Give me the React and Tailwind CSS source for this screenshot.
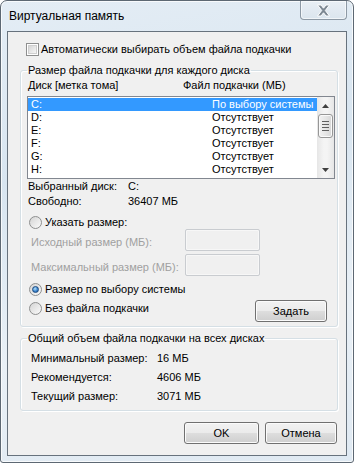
import React from 'react';

const drives = [
    { name: 'C:', size: 'По выбору системы' },
    { name: 'D:', size: 'Отсутствует' },
    { name: 'E:', size: 'Отсутствует' },
    { name: 'F:', size: 'Отсутствует' },
    { name: 'G:', size: 'Отсутствует' },
    { name: 'H:', size: 'Отсутствует' },
];

const btn =
    'h-[22px] rounded-[3px] border border-[#707070] bg-[linear-gradient(to_bottom,#f2f2f2_0%,#ebebeb_48%,#dddddd_52%,#cfcfcf_100%)] shadow-[inset_0_0_0_1px_#fbfbfb] text-black';

const Radio = ({ checked }) => (
    <span className="flex h-[13px] w-[13px] shrink-0 items-center justify-center rounded-full border border-[#8e8f8f] bg-[linear-gradient(135deg,#d4d4d4,#fbfbfb)]">
        {checked && (
            <span className="h-[7px] w-[7px] rounded-full border border-[#1b4a80] bg-[radial-gradient(circle_at_40%_35%,#b7e3fb,#3d86cf_55%,#1d5296)]" />
        )}
    </span>
);

const Checkbox = () => (
    <span className="flex h-[13px] w-[13px] shrink-0 items-center justify-center border border-[#8e8f8f] bg-white">
        <span className="h-[9px] w-[9px] border border-[#cfcfcf] bg-[linear-gradient(135deg,#d6d6d6,#f6f6f6)]" />
    </span>
);

const Arrow = ({ up }) => (
    <svg width="7" height="4" viewBox="0 0 7 4">
        <path d={up ? 'M0 4 L3.5 0 L7 4 Z' : 'M0 0 L3.5 4 L7 0 Z'} fill="#404040" />
    </svg>
);

const Scrollbar = () => (
    <div className="flex w-[17px] flex-col items-center bg-[linear-gradient(to_right,#e6e6e6,#f4f4f4_40%,#f4f4f4_60%,#e6e6e6)]">
        <div className="flex h-[17px] w-full items-center justify-center">
            <Arrow up />
        </div>
        <div className="flex h-[24px] w-[15px] flex-col items-center justify-center gap-[2px] rounded-[3px] border border-[#979797] bg-[linear-gradient(to_right,#f2f2f2,#e6e6e6_50%,#d6d6d6)] shadow-[inset_0_0_0_1px_#fafafa]">
            <span className="h-px w-[7px] bg-[#606060]" />
            <span className="h-px w-[7px] bg-[#606060]" />
            <span className="h-px w-[7px] bg-[#606060]" />
            <span className="h-px w-[7px] bg-[#606060]" />
        </div>
        <div className="flex-1" />
        <div className="flex h-[17px] w-full items-center justify-center">
            <Arrow />
        </div>
    </div>
);

const App = () => {
    return (
        <div className="h-[464px] w-[354px] whitespace-nowrap bg-white font-['Liberation_Sans',Arial,sans-serif] text-[11px] leading-[15px] text-black">
            <div className="flex h-[463px] w-[354px] flex-col rounded-t-[7px] rounded-b-[3px] border border-[#5d6873] bg-[linear-gradient(170deg,#e4edf5_0%,#d8e5f0_35%,#e9f0f6_70%,#dfe9f2_100%)] px-[6px] pb-[6px] shadow-[inset_0_0_0_1px_rgba(255,255,255,0.75)]">
                {/* Title bar */}
                <div className="flex h-[30px] shrink-0 items-start justify-between">
                    <span className="pl-[2px] pt-[8px] text-[12px]">Виртуальная память</span>
                    <div className="flex h-[19px] w-[47px] items-center justify-center rounded-b-[4px] border border-t-0 border-[#8d99a5] bg-[linear-gradient(to_bottom,#e9eff5,#dbe5ee)] shadow-[inset_0_0_0_1px_rgba(255,255,255,0.6)]">
                        <svg width="15" height="13" viewBox="0 0 15 13">
                            <path
                                d="M1.5 1 H5 L7.5 4.2 L10 1 H13.5 L9.3 6.5 L13.5 12 H10 L7.5 8.8 L5 12 H1.5 L5.7 6.5 Z"
                                fill="#7d8893"
                                stroke="#ffffff"
                                strokeWidth="1"
                                strokeLinejoin="round"
                            />
                        </svg>
                    </div>
                </div>

                {/* Client area */}
                <div className="min-h-0 flex-1 border border-[#67727d] bg-[#f0f0f0]">
                    <div className="ml-[18px] mt-[11px] flex h-[13px] items-center gap-[2px]">
                        <Checkbox />
                        <span>Автоматически выбирать объем файла подкачки</span>
                    </div>

                    {/* Per-disk group */}
                    <fieldset className="ml-[12px] mt-[7px] w-[318px] rounded-[3px] border border-[#d5dfe5] pb-[4px] pl-[6px] pr-[1px] shadow-[inset_1px_1px_0_#ffffff,1px_1px_0_#ffffff]">
                        <legend className="px-[1px]">Размер файла подкачки для каждого диска</legend>
                        <div className="flex pl-[1px]">
                            <span className="w-[155px]">Диск [метка тома]</span>
                            <span>Файл подкачки (МБ)</span>
                        </div>
                        <div className="mt-[3px] flex h-[83px] w-[308px] border border-[#828790] bg-white">
                            <div className="w-[289px] pt-[1px]">
                                {drives.map((d, i) => (
                                    <div
                                        key={d.name}
                                        className={`flex h-[13px] items-center pl-[3px] leading-[13px] ${
                                            i === 0 ? 'bg-[#3399ff] text-white' : ''
                                        }`}
                                    >
                                        <span className="w-[181px]">{d.name}</span>
                                        <span>{d.size}</span>
                                    </div>
                                ))}
                            </div>
                            <Scrollbar />
                        </div>

                        <div className="grid grid-cols-[100px_1fr] pl-[1px]">
                            <span>Выбранный диск:</span>
                            <span>C:</span>
                            <span>Свободно:</span>
                            <span>36407 МБ</span>
                        </div>

                        <div className="ml-[2px] mt-[7px] flex h-[13px] items-center gap-[3px]">
                            <Radio />
                            <span>Указать размер:</span>
                        </div>
                        <div className="flex h-[22px] items-center">
                            <span className="w-[158px] pl-[4px] pt-[4px] text-[#a0a0a0]">Исходный размер (МБ):</span>
                            <div className="h-[22px] w-[75px] rounded-[2px] border border-[#c9ccd0] bg-[#f0f0f0] shadow-[inset_0_0_0_1px_#f7f7f7]" />
                        </div>
                        <div className="mt-[3px] flex h-[22px] items-center">
                            <span className="w-[158px] pl-[4px] pt-[4px] text-[#a0a0a0]">Максимальный размер (МБ):</span>
                            <div className="h-[22px] w-[75px] rounded-[2px] border border-[#c9ccd0] bg-[#f0f0f0] shadow-[inset_0_0_0_1px_#f7f7f7]" />
                        </div>

                        <div className="ml-[2px] mt-[7px] flex h-[13px] items-center gap-[3px]">
                            <Radio checked />
                            <span>Размер по выбору системы</span>
                        </div>
                        <div className="flex items-start">
                            <div className="ml-[2px] mt-[6px] flex h-[13px] items-center gap-[3px]">
                                <Radio />
                                <span>Без файла подкачки</span>
                            </div>
                            <button className={`${btn} ml-auto mr-[9px] mt-[4px] w-[72px]`}>Задать</button>
                        </div>
                    </fieldset>

                    {/* Totals group */}
                    <fieldset className="ml-[12px] mt-[4px] w-[318px] rounded-[3px] border border-[#d5dfe5] pb-[4px] pl-[6px] pr-[1px] shadow-[inset_1px_1px_0_#ffffff,1px_1px_0_#ffffff]">
                        <legend className="px-[1px]">Общий объем файла подкачки на всех дисках</legend>
                        <div className="mt-[3px] grid grid-cols-[126px_1fr] pl-[4px] leading-[19px]">
                            <span>Минимальный размер:</span>
                            <span>16 МБ</span>
                            <span>Рекомендуется:</span>
                            <span>4606 МБ</span>
                            <span>Текущий размер:</span>
                            <span>3071 МБ</span>
                        </div>
                    </fieldset>

                    <div className="mr-[9px] mt-[11px] flex justify-end gap-[6px]">
                        <button className={`${btn} w-[75px]`}>OK</button>
                        <button className={`${btn} w-[72px]`}>Отмена</button>
                    </div>
                </div>
            </div>
        </div>
    );
};

export default App;
